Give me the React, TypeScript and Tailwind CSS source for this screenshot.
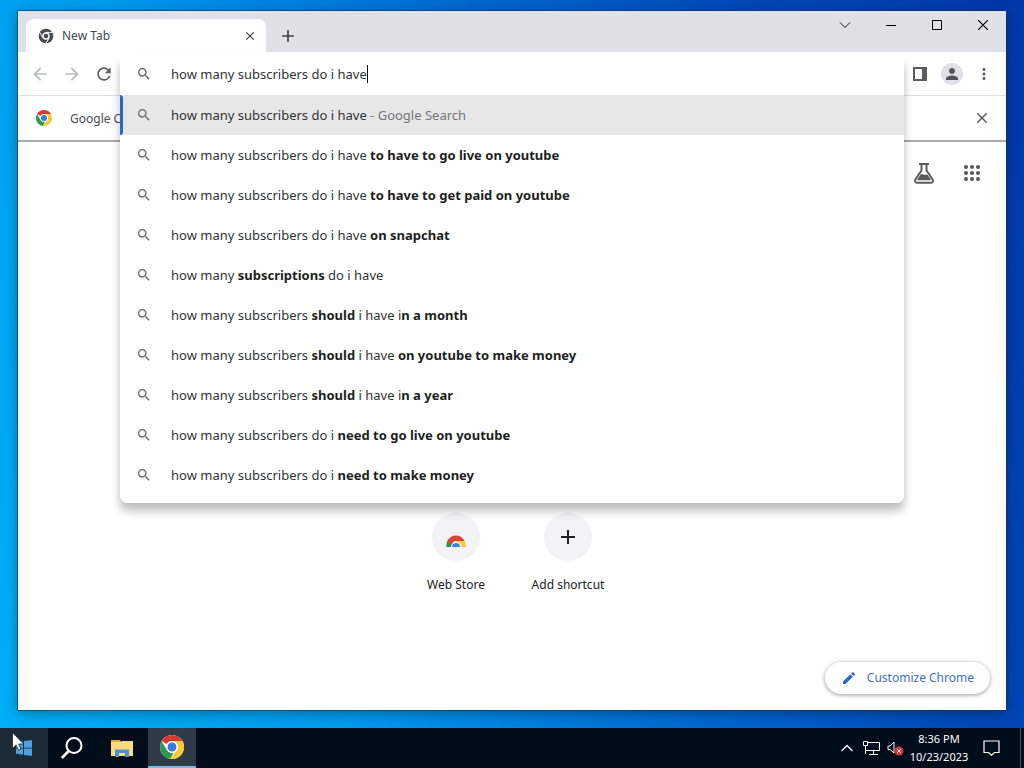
import React, { useState } from "react";
import {
  MdAdd,
  MdArrowBack,
  MdArrowForward,
  MdClose,
  MdEdit,
  MdMoreVert,
  MdPerson,
  MdRefresh,
  MdSearch,
} from "react-icons/md";

type Part = { text: string; bold?: boolean };

const suggestions: Part[][] = [
  [{ text: "how many subscribers do i have " }, { text: "to have to go live on youtube", bold: true }],
  [{ text: "how many subscribers do i have " }, { text: "to have to get paid on youtube", bold: true }],
  [{ text: "how many subscribers do i have " }, { text: "on snapchat", bold: true }],
  [{ text: "how many " }, { text: "subscriptions", bold: true }, { text: " do i have" }],
  [
    { text: "how many subscribers " },
    { text: "should", bold: true },
    { text: " i have i" },
    { text: "n a month", bold: true },
  ],
  [
    { text: "how many subscribers " },
    { text: "should", bold: true },
    { text: " i have " },
    { text: "on youtube to make money", bold: true },
  ],
  [
    { text: "how many subscribers " },
    { text: "should", bold: true },
    { text: " i have i" },
    { text: "n a year", bold: true },
  ],
  [{ text: "how many subscribers do i " }, { text: "need to go live on youtube", bold: true }],
  [{ text: "how many subscribers do i " }, { text: "need to make money", bold: true }],
];

const ChromeLogo = ({ className }: { className: string }) => (
  <svg viewBox="0 0 48 48" className={className} aria-hidden="true">
    <circle cx="24" cy="24" r="24" fill="#fff" />
    <path d="M24 0a24 24 0 0 1 20.8 12H24a12 12 0 0 0-10.4 6L3.2 12A24 24 0 0 1 24 0z" fill="#d93a2f" />
    <path d="M3.2 12 13.6 30A12 12 0 0 0 27 35.6L20.5 47.7A24 24 0 0 1 3.2 12z" fill="#2a9a4c" />
    <path d="M24 12h20.8A24 24 0 0 1 20.5 47.7L34.4 30A12 12 0 0 0 24 12z" fill="#fbc934" />
    <circle cx="24" cy="24" r="11.5" fill="#fff" />
    <circle cx="24" cy="24" r="9" fill="#3b78e0" />
  </svg>
);

const ChromeMono = () => (
  <svg viewBox="0 0 48 48" className="size-4" aria-hidden="true">
    <circle cx="24" cy="24" r="22" fill="#474b50" />
    <circle cx="24" cy="24" r="11" fill="#fff" />
    <circle cx="24" cy="24" r="7" fill="#474b50" />
    <path d="M24 13h21M14.500 29.500 4 11.500M33.500 29.500 23 47.500" stroke="#fff" strokeWidth="3" fill="none" />
  </svg>
);

const Flask = () => (
  <svg viewBox="0 0 24 24" className="size-6" fill="none" stroke="#5a5c5c" aria-hidden="true">
    <path
      d="M7 3h10M9.500 3v6.500L3.300 18.500a2 2 0 0 0 1.700 3.200h14a2 2 0 0 0 1.700-3.200L14.500 9.500V3"
      strokeWidth="2"
    />
    <path d="M8.500 13.500c1.500-1 4 1 7 0l3.700 5.700H4.800z" fill="#5a5c5c" stroke="none" />
  </svg>
);

const AppsGrid = () => (
  <svg viewBox="0 0 24 24" className="size-6" fill="currentColor" aria-hidden="true">
    {[6, 12, 18].map((y) => [6, 12, 18].map((x) => <circle key={`${x}-${y}`} cx={x} cy={y} r="2.1" />))}
  </svg>
);

const WindowControls = () => (
  <div className="flex self-start">
    <button aria-label="Search tabs" className="flex h-7 w-[46px] items-center justify-center">
      <svg viewBox="0 0 12 12" className="size-3" fill="none" stroke="#111">
        <path d="M1 3.500 6 8.500l5-5" />
      </svg>
    </button>
    <button aria-label="Minimize" className="flex h-7 w-[46px] items-center justify-center">
      <svg viewBox="0 0 10 10" className="size-2.5" stroke="#000">
        <path d="M0 5.500h10" />
      </svg>
    </button>
    <button aria-label="Maximize" className="flex h-7 w-[46px] items-center justify-center">
      <svg viewBox="0 0 10 10" className="size-2.5" fill="none" stroke="#000">
        <path d="M.5.500h9v9h-9z" />
      </svg>
    </button>
    <button aria-label="Close" className="flex h-7 w-[46px] items-center justify-center">
      <svg viewBox="0 0 10 10" className="size-2.5" stroke="#000" strokeWidth="1.200">
        <path d="M0 0l10 10M10 0 0 10" />
      </svg>
    </button>
  </div>
);

const TabStrip = () => (
  <div className="flex h-[41px] items-end bg-[#dee1e6] pl-2">
    <div className="flex h-[33px] w-60 items-center rounded-t-lg bg-white pr-2 pl-3">
      <ChromeMono />
      <span className="ml-2 flex-1 text-xs text-[#45494d]">New Tab</span>
      <button aria-label="Close tab" className="flex size-4 items-center justify-center text-[#3c4043]">
        <MdClose size={14} />
      </button>
    </div>
    <button aria-label="New tab" className="ml-3 flex h-[33px] w-5 items-center justify-center text-[#3c4043]">
      <MdAdd size={20} />
    </button>
    <div className="flex-1" />
    <WindowControls />
  </div>
);

const Omnibox = () => {
  const [query, setQuery] = useState<string>("how many subscribers do i have");

  return (
    <div className="absolute inset-x-0 top-px z-10 overflow-hidden rounded-lg bg-white pb-2 text-[13px] text-[#303335]">
      <label className="flex h-[42px] items-center pl-4">
        <MdSearch size={16} className="text-[#5f6368]" />
        <input
          type="text"
          aria-label="Address and search bar"
          value={query}
          onChange={(e) => setQuery(e.target.value)}
          className="ml-[19px] field-sizing-content pt-0.5 outline-none"
        />
        <span className="h-[18px] w-px bg-black" />
      </label>
      <ul>
        <li>
          <button className="flex h-10 w-full items-center bg-[#e7e7e7] text-left">
            <span className="h-full w-[3px] rounded-r-sm bg-[#2a66c4]" />
            <MdSearch size={16} className="ml-[13px] text-[#6b6e70]" />
            <span className="ml-[19px] pt-0.5 whitespace-pre">
              {query}
              <span className="text-[#74777a]"> - Google Search</span>
            </span>
          </button>
        </li>
        {suggestions.map((parts, i) => (
          <li key={i}>
            <button className="flex h-10 w-full items-center pl-4 text-left">
              <MdSearch size={16} className="text-[#6b6e70]" />
              <span className="ml-[19px] pt-0.5 whitespace-pre">
                {parts.map((p, j) =>
                  p.bold ? (
                    <b key={j} className="font-bold text-[#1c1e20]">
                      {p.text}
                    </b>
                  ) : (
                    <span key={j}>{p.text}</span>
                  )
                )}
              </span>
            </button>
          </li>
        ))}
      </ul>
    </div>
  );
};

const Toolbar = () => (
  <div className="flex h-11 border-b border-[#dcdedf] bg-white px-1.5 text-[#5a5c5e]">
    <button aria-label="Back" className="flex w-8 items-center justify-center text-[#b9bbbd]">
      <MdArrowBack size={20} />
    </button>
    <button aria-label="Forward" className="flex w-8 items-center justify-center text-[#b9bbbd]">
      <MdArrowForward size={20} />
    </button>
    <button aria-label="Reload" className="flex w-8 items-center justify-center">
      <MdRefresh size={20} />
    </button>
    <div className="relative flex-1">
      <div className="absolute inset-x-0 top-px h-[450px] rounded-lg shadow-[0_8px_10px_rgba(0,0,0,0.26)]" />
      <Omnibox />
    </div>
    <button aria-label="Side panel" className="flex w-8 items-center justify-center">
      <svg viewBox="0 0 14 14" className="size-3.5">
        <path d="M1 1h12v12H1z" fill="none" stroke="currentColor" strokeWidth="2" />
        <path d="M9 1h4v12H9z" fill="currentColor" />
      </svg>
    </button>
    <button aria-label="Profile" className="flex w-8 items-center justify-center">
      <span className="flex size-[22px] items-center justify-center rounded-full bg-[#dfe1e8] text-[#50555c]">
        <MdPerson size={18} />
      </span>
    </button>
    <button aria-label="Menu" className="flex w-8 items-center justify-center">
      <MdMoreVert size={18} />
    </button>
  </div>
);

const NewTabPage = () => (
  <main className="flex flex-1 flex-col bg-white">
    <div className="flex justify-end gap-6 pt-[19px] pr-[22px] text-[#5a5c5c]">
      <button aria-label="Search Labs">
        <Flask />
      </button>
      <button aria-label="Google apps">
        <AppsGrid />
      </button>
    </div>
    <div className="mt-auto flex justify-center text-xs text-[#202124]">
      <a href="#" className="flex w-28 flex-col items-center gap-4">
        <span className="flex size-12 items-center justify-center rounded-full bg-[#f1f3f4]">
          <svg viewBox="0 0 20 20" className="size-5" aria-hidden="true">
            <path d="M0 20A10 12 0 0 1 3 11.500L7 16 5 20z" fill="#2f9651" />
            <path d="M1.300 14a10 11 0 0 1 17.400 0H10a5 5 0 0 0-4.500 4z" fill="#dc4435" />
            <path d="M10 14h8.700A12 12 0 0 1 20 20h-5a5 5 0 0 0-5-5z" fill="#fbc84b" />
            <path d="M5 20a5 5 0 0 1 10 0z" fill="#fff" />
            <path d="M6 20a4 4 0 0 1 8 0z" fill="#3f7fe6" />
          </svg>
        </span>
        <span>Web Store</span>
      </a>
      <button className="flex w-28 flex-col items-center gap-4">
        <span className="flex size-12 items-center justify-center rounded-full bg-[#f1f3f4]">
          <MdAdd size={24} />
        </span>
        <span>Add shortcut</span>
      </button>
    </div>
    <div className="flex justify-end px-4 pt-[69px] pb-4">
      <button className="flex h-8 items-center gap-2.5 rounded-full bg-white px-4 text-xs text-[#3f6fc4] shadow-[0_1px_4px_rgba(0,0,0,0.4)]">
        <MdEdit size={16} className="text-[#2a6bc6]" />
        Customize Chrome
      </button>
    </div>
  </main>
);

const Taskbar = () => (
  <footer className="flex h-10 items-stretch bg-[#020d1c] text-white">
    <button aria-label="Start" className="relative flex w-12 items-center justify-center bg-[#1b2b37]">
      <svg viewBox="0 0 16 16" className="size-4" fill="#4c9fe0">
        <path d="M0 2.300 7 1.300v6.400H0zM8 1.100 16 0v7.700H8zM0 8.500h7v6.300l-7-1zM8 8.500h8V16l-8-1.100z" />
      </svg>
      <svg viewBox="0 0 12 19" className="absolute top-1 left-3 h-[19px] w-3">
        <path d="M.5.500v16l3.700-3.600 2.400 5.300 2.300-1-2.300-5.200h5z" fill="#fff" stroke="#111" strokeWidth=".7" />
      </svg>
    </button>
    <button aria-label="Search" className="flex w-12 items-center justify-center">
      <svg viewBox="0 0 24 24" className="size-6" fill="none" stroke="#fff" strokeWidth="2">
        <circle cx="14" cy="9.500" r="7.500" />
        <path d="M8.700 15 1.800 22" strokeWidth="2.500" />
      </svg>
    </button>
    <button aria-label="File Explorer" className="flex w-[52px] items-center justify-center">
      <svg viewBox="0 0 22 20" className="h-5 w-[22px]">
        <path d="M0 2h9l1.500 2H0z" fill="#e0a83a" />
        <path d="M0 4h10l1-1h11v15H0z" fill="#fbdc7c" />
        <path d="M4 19v-7.500h14V19h-4v-4H8v4z" fill="#4a94cc" />
      </svg>
    </button>
    <button
      aria-label="Google Chrome"
      className="flex w-12 items-center justify-center border-b-2 border-[#76b9ed] bg-[#2f3c48]"
    >
      <ChromeLogo className="size-6" />
    </button>
    <div className="flex-1" />
    <button aria-label="Show hidden icons" className="flex w-6 items-center justify-center">
      <svg viewBox="0 0 12 8" className="h-2 w-3" fill="none" stroke="#fff" strokeWidth="1.300">
        <path d="M.5 7 6 1.500 11.500 7" />
      </svg>
    </button>
    <button aria-label="Network" className="flex w-6 items-center justify-center">
      <svg viewBox="0 0 17 14" className="h-3.5 w-[17px]" fill="none" stroke="#fff">
        <path d="M5 1.500h11.500v8H4.500M.5.500h4v4h-4zM2.500 4.500v8.500M10.500 9.500v3.500M6 13.500h9M2.500 9.500H5" />
      </svg>
    </button>
    <button aria-label="Volume" className="flex w-6 items-center justify-center">
      <svg viewBox="0 0 17 15" className="h-[15px] w-[17px]">
        <path d="M1 5h2l4-4v11L3 8.500H1z" fill="none" stroke="#fff" />
        <circle cx="12" cy="10" r="4.500" fill="#d0383a" />
        <path d="m10.300 8.300 3.400 3.400m0-3.400-3.400 3.400" stroke="#fff" />
      </svg>
    </button>
    <div className="flex w-16 flex-col items-center justify-center text-[11px] leading-[18px] whitespace-nowrap">
      <span>8:36 PM</span>
      <span>10/23/2023</span>
    </div>
    <button aria-label="Notifications" className="flex w-10 items-center justify-center">
      <svg viewBox="0 0 17 16" className="h-4 w-[17px]" fill="none" stroke="#fff" strokeWidth="1.200">
        <path d="M1 1h15v11.500h-4.500l-3 2.800-3-2.800H1z" />
      </svg>
    </button>
    <button aria-label="Show desktop" className="ml-[9px] w-1 border-l border-[#4b5560]" />
  </footer>
);

const App = () => {
  const [infobar, setInfobar] = useState<boolean>(true);

  return (
    <div className="flex min-h-screen flex-col bg-[linear-gradient(72deg,#00b0f5_0%,#009bee_28%,#0072d8_50%,#0048b8_78%,#0038a8_100%)] font-['Noto_Sans','Open_Sans',sans-serif]">
      <div className="flex flex-1 flex-col px-[18px] pt-[11px] pb-[18px]">
        <div className="flex flex-1 flex-col shadow-[0_0_0_1px_rgba(20,50,90,0.6),0_3px_12px_rgba(0,0,0,0.35)]">
          <TabStrip />
          <Toolbar />
          {infobar && (
            <div className="flex h-[46px] items-center justify-between border-b-2 border-[#a9abaa] bg-white pr-[15px] pl-[18px] text-xs text-[#4a4d50]">
              <div className="flex items-center gap-[18px]">
                <ChromeLogo className="size-4" />
                <span className="pt-0.5 whitespace-nowrap">Google Chrome</span>
              </div>
              <button aria-label="Dismiss" onClick={() => setInfobar(false)} className="text-[#5a5c5e]">
                <MdClose size={18} />
              </button>
            </div>
          )}
          <NewTabPage />
        </div>
      </div>
      <Taskbar />
    </div>
  );
};

export default App;
